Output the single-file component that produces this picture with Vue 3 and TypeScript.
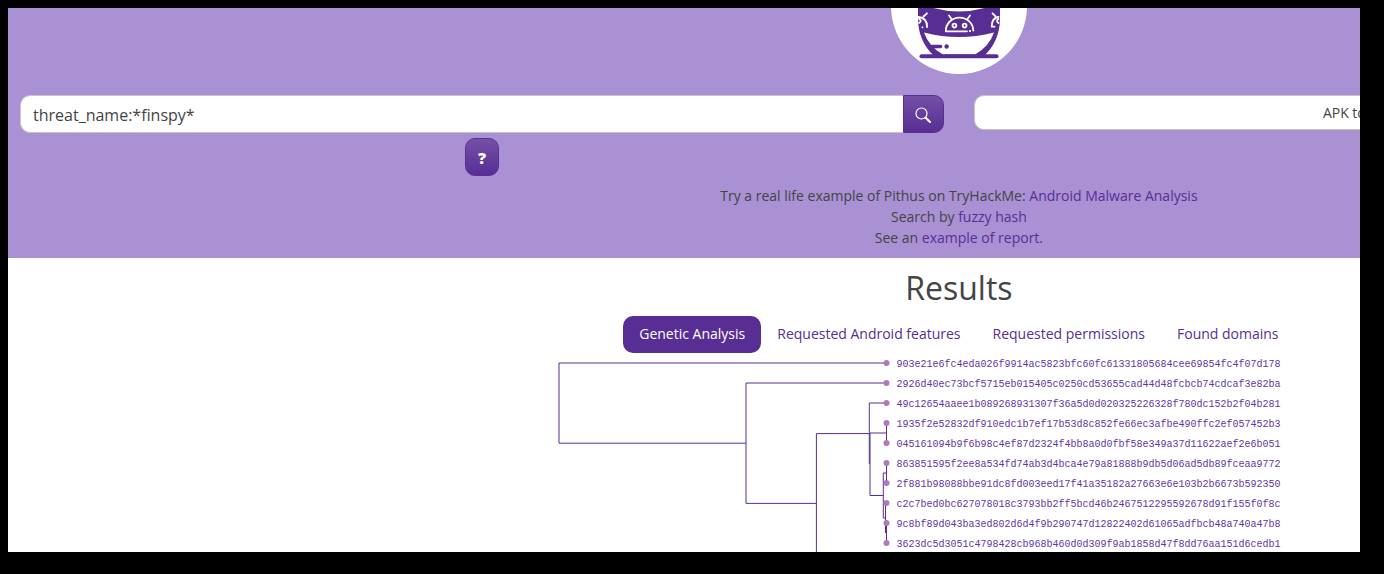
<script setup lang="ts">
import { ref } from 'vue'

const query = ref('threat_name:*finspy*')
const tabs: string[] = ['Genetic Analysis', 'Requested Android features', 'Requested permissions', 'Found domains']
const active = ref(0)

const hashes: string[] = [
  '903e21e6fc4eda026f9914ac5823bfc60fc61331805684cee69854fc4f07d178',
  '2926d40ec73bcf5715eb015405c0250cd53655cad44d48fcbcb74cdcaf3e82ba',
  '49c12654aaee1b089268931307f36a5d0d020325226328f780dc152b2f04b281',
  '1935f2e52832df910edc1b7ef17b53d8c852fe66ec3afbe490ffc2ef057452b3',
  '045161094b9f6b98c4ef87d2324f4bb8a0d0fbf58e349a37d11622aef2e6b051',
  '863851595f2ee8a534fd74ab3d4bca4e79a81888b9db5d06ad5db89fceaa9772',
  '2f881b98088bbe91dc8fd003eed17f41a35182a27663e6e103b2b6673b592350',
  'c2c7bed0bc627078018c3793bb2ff5bcd46b2467512295592678d91f155f0f8c',
  '9c8bf89d043ba3ed802d6d4f9b290747d12822402d61065adfbcb48a740a47b8',
  '3623dc5d3051c4798428cb968b460d0d309f9ab1858d47f8dd76aa151d6cedb1',
]

// Dendrogram branches, in the coordinates of the chart
const branches: string[] = [
  'M338.5 10H11V90.2H198',
  'M338.5 30H198V150.4H268.4',
  'M268.4 210V80.6H321.5',
  'M338.5 50H321.3V111',
  'M338.5 80H322V142.5H335.3',
  'M338.5 70V90',
  'M338.5 120H335.3V165H337.5',
  'M338.5 110V130',
  'M337.5 150V180',
  'M338.5 170V190',
]
</script>

<template>
  <div class="frame">
    <main class="viewport">
      <div class="page">
        <header class="hero">
          <div class="logo">
            <svg viewBox="0 0 136 136" role="img" aria-label="Pithus">
              <circle cx="68" cy="68" r="68" fill="#fff" />
              <path d="M27 68H36Q68 79 100 68H109V80Q109 103 93 118H43Q27 103 27 80Z" fill="#582e94" />
              <path d="M33 94.500Q68 103.500 103 94.500Q98 109 84 116.500H52Q38 109 33 94.500Z" fill="#fff" />
              <path d="M30.500 118.300H105.500" stroke="#582e94" stroke-width="4" stroke-linecap="round" />
              <path d="M39 108.500H49.500" stroke="#582e94" stroke-width="3.600" stroke-linecap="round" />
              <circle cx="55.600" cy="108.500" r="2.200" fill="#582e94" />
              <g fill="none" stroke="#fff" stroke-width="1.800" stroke-linecap="round" stroke-linejoin="round">
                <path d="M76 93.300H54.800A13.700 13.300 0 0 1 82.300 92.500M60.500 81L58 77.500M76.500 81L79 77.500M78.800 93H79.200" />
                <circle cx="63.400" cy="87.600" r="1.900" />
                <circle cx="73.600" cy="87.600" r="1.900" />
                <path d="M27.500 79Q36.500 80 36 89M32.500 78.500L36 75.300M28 81Q31.500 82.500 28 85M31.300 89.300H31.500" />
                <path d="M107.500 79Q100.500 80 100.700 88.700H103.500M104.700 78.500L101.500 75.300M107.500 81Q104.500 82.500 107.500 85" />
              </g>
            </svg>
          </div>
          <div class="forms">
            <form class="search" @submit.prevent>
              <div class="group">
                <input v-model="query" class="query" type="text" aria-label="Search" />
                <button class="btn go" type="submit" aria-label="Run search">
                  <svg viewBox="0 0 16 16" width="16" height="16" fill="none" stroke="#fff" stroke-width="1.200">
                    <circle cx="6.500" cy="6.500" r="5.500" />
                    <path d="M10.700 10.700L15 15" stroke-width="2" stroke-linecap="round" />
                  </svg>
                </button>
              </div>
              <button class="btn help" type="button" aria-label="Search help">?</button>
            </form>
            <div class="upload">
              <button class="drop" type="button">APK to examine</button>
            </div>
          </div>
          <p class="hints">
            Try a real life example of Pithus on TryHackMe: <a href="#">Android Malware Analysis</a><br />
            Search by <a href="#">fuzzy hash</a><br />
            See an <a href="#">example of report</a>.
          </p>
        </header>
        <section class="results">
          <h1>Results</h1>
          <nav class="tabs">
            <a v-for="(tab, i) in tabs" :key="tab" href="#" :class="{ active: i === active }" @click.prevent="active = i">{{ tab }}</a>
          </nav>
          <svg class="tree" width="822" height="400" viewBox="0 0 822 400">
            <path v-for="d in branches" :key="d" :d="d" class="branch" />
            <g v-for="(hash, i) in hashes" :key="hash">
              <circle cx="338.500" :cy="10 + i * 20" r="3" class="leaf" />
              <text x="348.500" :y="14 + i * 20" class="hash">{{ hash }}</text>
            </g>
          </svg>
        </section>
      </div>
    </main>
  </div>
</template>

<style>
body {
  margin: 0;
  background: #000;
}
</style>

<style scoped>
* {
  box-sizing: border-box;
}
.frame {
  height: 100vh;
  padding: 8px 24px 22px 8px;
  background: #000;
  font: 14px/21px "Open Sans", sans-serif;
  color: #444;
}
.viewport {
  height: 100%;
  overflow: hidden;
  background: #fff;
}
.page {
  width: calc(140% + 9px);
}
.hero {
  height: 250px;
  background: #a991d4;
}
.logo {
  height: 66px;
  display: flex;
  align-items: flex-end;
  justify-content: center;
  overflow: hidden;
}
.logo svg {
  flex: none;
  width: 136px;
  height: 136px;
}
.forms {
  display: grid;
  grid-template-columns: 1fr 1fr;
  margin-top: 21px;
}
.search {
  display: flex;
  flex-direction: column;
  align-items: center;
  gap: 5px;
  padding: 0 15px 0 12px;
}
.group {
  display: flex;
  width: 100%;
  height: 38px;
}
.query {
  flex: 1;
  min-width: 0;
  padding: 2px 12px 0;
  border: 1px solid #c8c4cc;
  border-right: 0;
  border-radius: 10px 0 0 10px;
  background: #fff;
  font: 16px/24px "Open Sans", sans-serif;
  color: #444;
  outline: none;
}
.btn {
  display: flex;
  align-items: center;
  justify-content: center;
  padding: 2px 0 0;
  border: 1px solid #582e94;
  background: linear-gradient(#7450a6, #582e94);
  color: #fff;
}
.go {
  width: 41px;
  border-radius: 0 10px 10px 0;
}
.help {
  width: 34px;
  height: 38px;
  border-radius: 10px;
  font: 800 16px/24px "Open Sans", sans-serif;
}
.upload {
  padding: 0 12px 0 15px;
}
.drop {
  display: block;
  width: 100%;
  height: 35px;
  padding: 0 0 0 348px;
  border: 1px solid #c8c4cc;
  border-radius: 10px;
  background: #fff;
  font: 14px/21px "Open Sans", sans-serif;
  color: #444;
  text-align: left;
}
.hints {
  margin: 9px 0 0;
  text-align: center;
}
a {
  color: #582e94;
  text-decoration: none;
}
.results {
  display: flex;
  flex-direction: column;
  align-items: center;
}
h1 {
  margin: 10px 0 8px;
  font-size: 32px;
  line-height: 40px;
  font-weight: 400;
}
.tabs {
  display: flex;
}
.tabs a {
  padding: 7px 16px 9px;
  border-radius: 10px;
}
.tabs .active {
  background: #582e94;
  color: #fff;
}
.tree {
  display: block;
}
.branch {
  fill: none;
  stroke: #582e94;
  stroke-width: 1px;
}
.leaf {
  fill: #b078bd;
}
.hash {
  font: 10px "Liberation Mono", monospace;
  fill: #6236a0;
}
</style>
